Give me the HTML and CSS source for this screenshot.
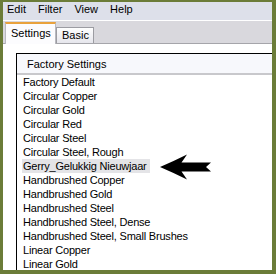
FILE: index.html
```html
<!DOCTYPE html>
<html>
	<head>
		<meta charset="utf-8">
		<title>Factory Settings</title>
		<link rel="stylesheet" href="styles.css">
	</head>
	<body>
		<div class="ventana">
			<nav class="menu">
				<span>Edit</span>
				<span>Filter</span>
				<span>View</span>
				<span>Help</span>
			</nav>

			<div class="pestanas">
				<div class="pestana activa">Settings</div>
				<div class="pestana">Basic</div>
			</div>

			<div class="panel">
				<div class="lista">
					<div class="cabecera">Factory Settings</div>
					<ul class="filas">
						<li><span>Factory Default</span></li>
						<li><span>Circular Copper</span></li>
						<li><span>Circular Gold</span></li>
						<li><span>Circular Red</span></li>
						<li><span>Circular Steel</span></li>
						<li><span>Circular Steel, Rough</span></li>
						<li><span class="marcada">Gerry_Gelukkig Nieuwjaar</span></li>
						<li><span>Handbrushed Copper</span></li>
						<li><span>Handbrushed Gold</span></li>
						<li><span>Handbrushed Steel</span></li>
						<li><span>Handbrushed Steel, Dense</span></li>
						<li><span>Handbrushed Steel, Small Brushes</span></li>
						<li><span>Linear Copper</span></li>
						<li><span>Linear Gold</span></li>
					</ul>
					<!-- flecha que señala la fila -->
					<svg class="flecha" width="52" height="28" viewBox="0 0 52 28">
						<path d="M0 14 Q14 8 27 1.5 Q24 6 21.5 9.5 L51 9.5 L46 14 L51 18.5 L21.5 18.5 Q24 22 27 26.5 Q14 20 0 14 Z" fill="#000"/>
					</svg>
				</div>
			</div>
		</div>
	</body>
</html>
```

FILE: styles.css
```css
* {
    margin: 0;
    padding: 0;
    box-sizing: border-box;
}

body {
    font-family: "Liberation Sans", Arial, sans-serif;
    font-size: 11px;
    color: #000;
}

/* marco verde */
.ventana {
    width: 276px;
    height: 274px;
    background-color: #6b7c38;
    padding: 2px 4px 4px 3px;
    display: flex;
    flex-direction: column;
    overflow: hidden;
}

/* menu */
.menu {
    height: 19px;
    background-color: #dde0ea;
    border-bottom: 1px solid #fff;
    display: flex;
    gap: 12px;
    padding-left: 4px;
    line-height: 15px;
}

/* pestañas */
.pestanas {
    height: 23px;
    background-color: #d9d8dd;
    border-bottom: 1px solid #a5a5aa;
    display: flex;
    align-items: flex-end;
    padding-left: 2px;
}

.pestana {
    height: 16px;
    width: 38px;
    padding-left: 5px;
    line-height: 14px;
    border: 1px solid #9c9ca2;
    border-bottom: none;
    background: linear-gradient(#fefefe, #e6e6ec);
}

.pestana.activa {
    height: 22px;
    width: 51px;
    margin-bottom: -1px;
    padding-top: 2px;
    border-color: #b9b9bf;
    border-top: 2px solid #e9a23c;
    background: #fcfcfe;
}

/* panel blanco */
.panel {
    flex: 1;
    background-color: #fff;
    padding: 9px 0 0 13px;
    display: flex;
    min-height: 0;
}

.lista {
    flex: 1;
    position: relative;
    border-top: 1px solid #000;
    border-left: 1px solid #000;
}

.cabecera {
    height: 21px;
    padding: 1px 0 0 10px;
    line-height: 18px;
    background-color: #f7f8fc;
    border-bottom: 2px solid #c8c8cc;
}

.filas {
    list-style: none;
    padding-left: 5px;
    letter-spacing: -0.2px;
}

.filas li {
    height: 14px;
    line-height: 14px;
    white-space: nowrap;
}

.filas span {
    display: inline-block;
    padding: 0 1px;
    height: 14px;
}

.filas .marcada {
    background-color: #e4e4e7;
    padding-right: 3px;
}

.flecha {
    position: absolute;
    left: 143px;
    top: 99px;
}
```
